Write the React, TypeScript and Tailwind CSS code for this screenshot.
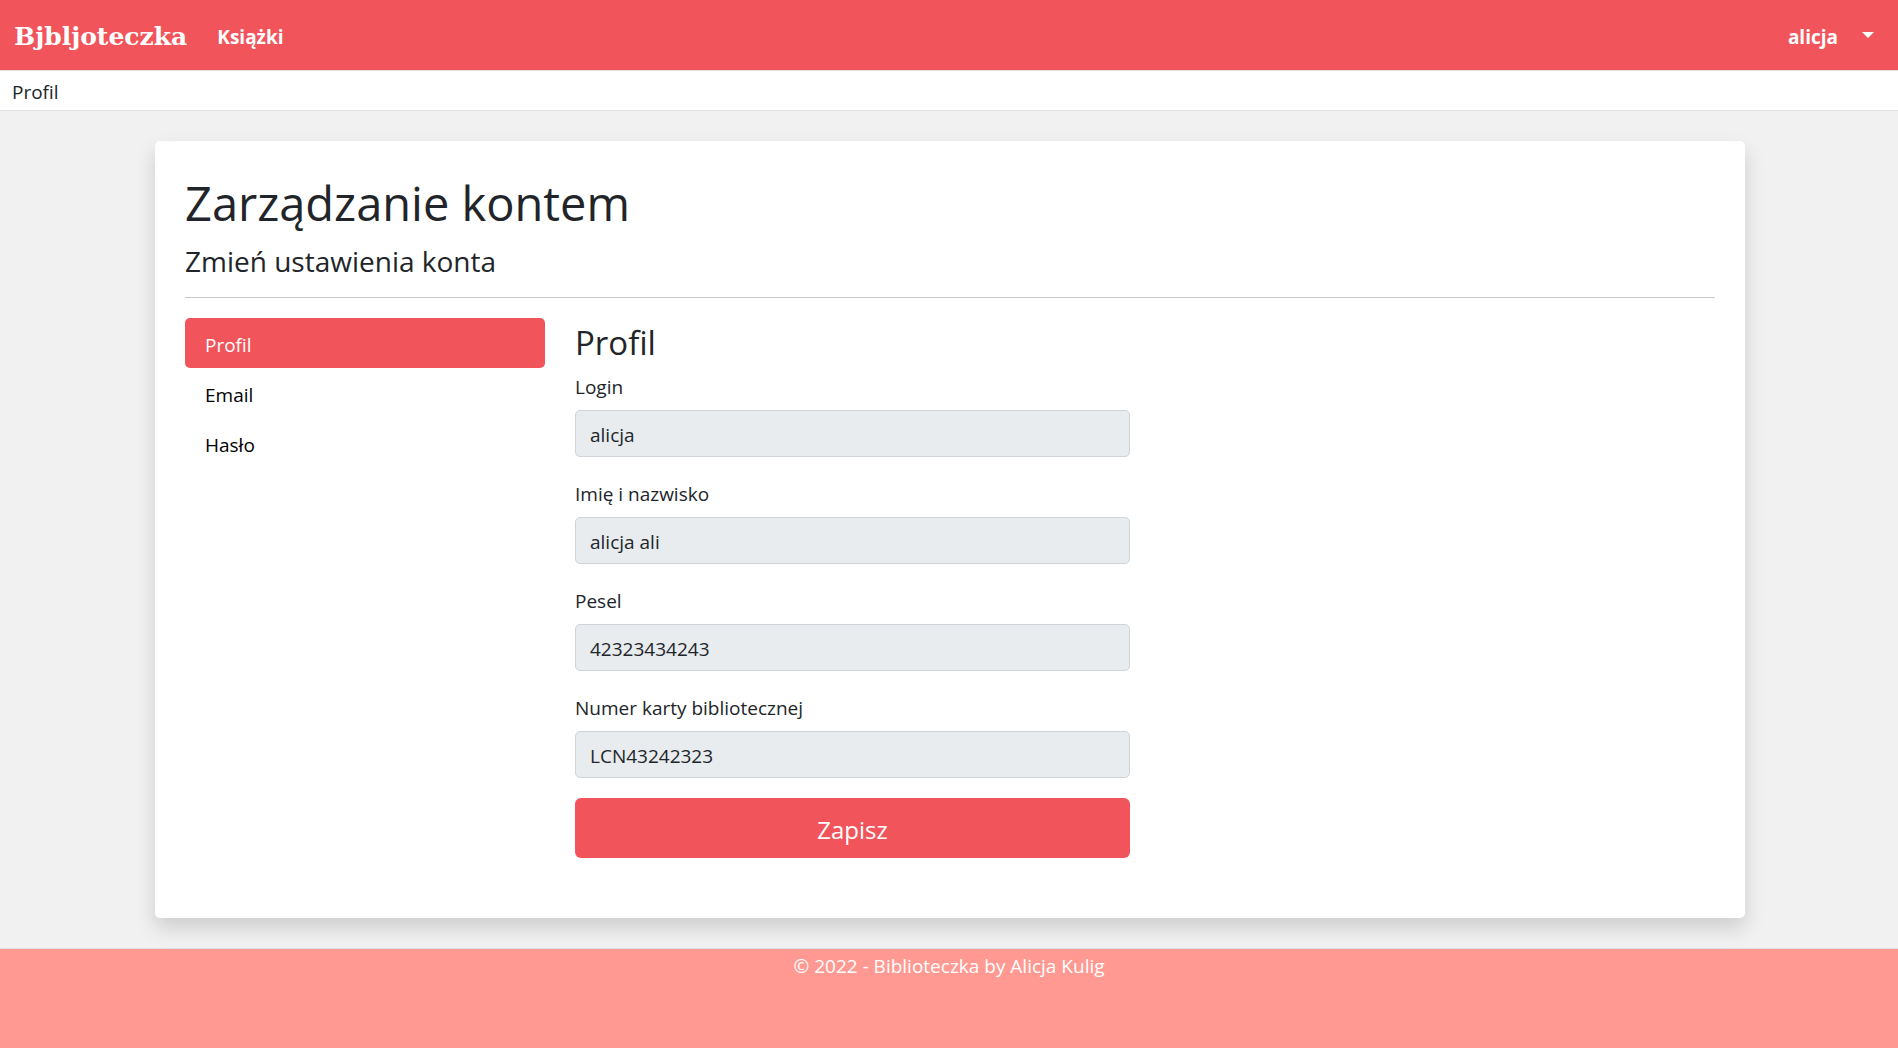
import { useState } from "react";

const fields = [
  { id: "login", label: "Login", value: "alicja" },
  { id: "name", label: "Imię i nazwisko", value: "alicja ali" },
  { id: "pesel", label: "Pesel", value: "42323434243" },
  { id: "card", label: "Numer karty bibliotecznej", value: "LCN43242323" },
];

const sections = ["Profil", "Email", "Hasło"];

function Header() {
  return (
    <header className="flex items-center justify-between border-b border-[#dee2e6] bg-[#f2545b] px-3.5 pt-[22px] pb-[18px] text-white">
      <nav className="flex items-center gap-[30px]">
        <a href="#" className="font-['DejaVu_Serif',serif] text-[25px] leading-[30px] font-bold">
          Bjbljoteczka
        </a>
        <a href="#" className="text-[19px] leading-[30px] font-bold">
          Książki
        </a>
      </nav>
      <button type="button" className="flex items-center gap-6 pr-2.5 text-[19px] leading-[30px] font-bold">
        alicja
        <svg className="mb-1" width="12" height="6" viewBox="0 0 12 6" fill="currentColor" aria-hidden="true">
          <path d="M0 0h12L6 6z" />
        </svg>
      </button>
    </header>
  );
}

function SideNav() {
  const [active, setActive] = useState("Profil");
  return (
    <nav className="flex flex-col">
      {sections.map((s) => (
        <a
          key={s}
          href="#"
          onClick={() => setActive(s)}
          className={
            s === active
              ? "rounded-[5px] bg-[#f2545b] px-5 pt-3 pb-2 leading-[30px] text-white"
              : "rounded-[5px] px-5 pt-3 pb-2 leading-[30px] text-black"
          }
        >
          {s}
        </a>
      ))}
    </nav>
  );
}

function ProfileForm() {
  return (
    <form className="w-1/2 pr-[15px]" onSubmit={(e) => e.preventDefault()}>
      {fields.map((f) => (
        <div key={f.id} className="mb-[22px] last-of-type:mb-5">
          <label htmlFor={f.id} className="mb-2 block leading-[30px]">
            {f.label}
          </label>
          <input
            id={f.id}
            defaultValue={f.value}
            readOnly
            className="block h-[47px] w-full rounded-[5px] border border-[#ced4da] bg-[#e8ecef] px-3.5 pt-0.5"
          />
        </div>
      ))}
      <button
        type="submit"
        className="block w-full rounded-[6px] bg-[#f2545b] pt-3 pb-2 text-[24px] leading-10 text-white"
      >
        Zapisz
      </button>
    </form>
  );
}

export default function App() {
  return (
    <div className="flex min-h-screen flex-col bg-[#f1f1f1] font-['Open_Sans','Noto_Sans',sans-serif] text-[19px] text-[#212529]">
      <Header />
      <div className="border-b border-[#dee2e6] bg-white px-3 pt-1.5 pb-[3px] leading-[30px]">Profil</div>
      <main className="pt-[30px] pb-[30px] pl-0.5">
        <div className="mx-auto max-w-[1590px] rounded-[5px] bg-white px-[30px] pt-[30px] pb-[60px] shadow-[0_10px_20px_rgba(0,0,0,0.15)]">
          <h1 className="mb-2.5 pt-0.5 text-[47px] leading-[60px]">Zarządzanie kontem</h1>
          <h2 className="text-[28px] leading-9">Zmień ustawienia konta</h2>
          <hr className="mt-[18px] mb-5 border-[#c8c9ca]" />
          <div className="grid grid-cols-4 gap-x-[30px]">
            <SideNav />
            <section className="col-span-3">
              <h3 className="mb-2 pt-1 text-[33px] leading-[42px]">Profil</h3>
              <ProfileForm />
            </section>
          </div>
        </div>
      </main>
      <footer className="grow border-t border-[#dee2e6] bg-[#ff9992] text-center leading-[34px] text-white">
        © 2022 - Biblioteczka by Alicja Kulig
      </footer>
    </div>
  );
}
